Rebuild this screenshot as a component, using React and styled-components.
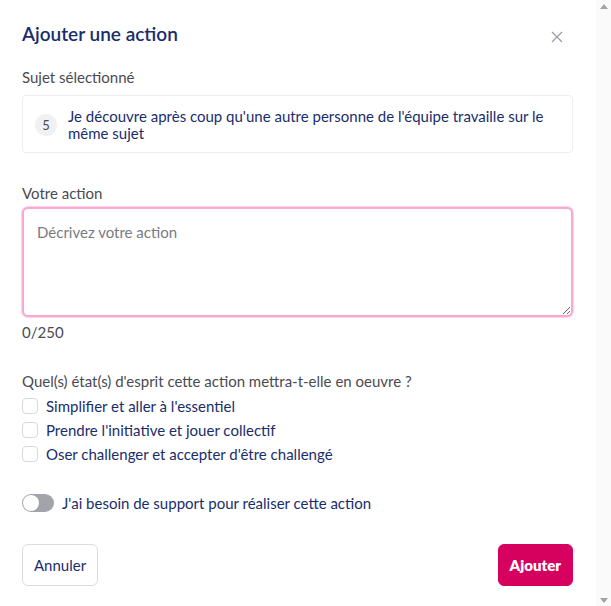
import styled, { createGlobalStyle } from "styled-components";

const GlobalStyle = createGlobalStyle`
  body {
    margin: 0;
    background: #fff;
    font-family: Lato, "Noto Sans", sans-serif;
    -webkit-font-smoothing: antialiased;
  }
  * {
    box-sizing: border-box;
  }
`;

const NAVY = "#1a2d6b";
const PINK = "#d6005f";

const Page = styled.div`
  display: flex;
  height: 100vh;
  overflow: hidden;
`;

const Modal = styled.div`
  flex: 1;
  display: flex;
  flex-direction: column;
  padding: 21px 23px 20px 22px;
  color: ${NAVY};
`;

const ScrollTrack = styled.div`
  flex: none;
  width: 15px;
  display: flex;
  flex-direction: column;
  justify-content: space-between;
  align-items: center;
  padding: 4px 0 3px;
  background: #fafafa;
`;

const Header = styled.div`
  display: flex;
  align-items: center;
  justify-content: space-between;
  height: 26px;
  margin-bottom: 20px;
`;

const Title = styled.h2`
  margin: 0;
  font-size: 19px;
  font-weight: 600;
  color: ${NAVY};
`;

const CloseButton = styled.button`
  border: none;
  background: transparent;
  padding: 0;
  margin-right: 10px;
  margin-top: 6px;
  width: 12px;
  height: 12px;
  display: flex;
  cursor: pointer;
`;

const Label = styled.div`
  font-size: 15px;
  color: #4a4a52;
  line-height: 20px;
  margin-bottom: ${(p) => p.$gap || 8}px;
`;

const SubjectBox = styled.div`
  display: flex;
  align-items: center;
  gap: 11px;
  border: 1px solid #eeeeef;
  border-radius: 4px;
  padding: 12px 12px 10px 12px;
  margin-bottom: 30px;
`;

const Badge = styled.span`
  flex: none;
  width: 22px;
  height: 22px;
  border-radius: 50%;
  background: #f1f1f2;
  color: #4a4a52;
  font-size: 13px;
  display: flex;
  align-items: center;
  justify-content: center;
`;

const SubjectText = styled.span`
  font-size: 15px;
  line-height: 17px;
  color: ${NAVY};
`;

const TextArea = styled.textarea`
  display: block;
  width: 100%;
  height: 112px;
  margin-top: -1px;
  resize: vertical;
  border: 2px solid #f7a9d2;
  box-shadow: 0 0 0 1px #fcd3e8;
  border-radius: 6px;
  padding: 14px 13px;
  font-family: inherit;
  font-size: 15px;
  color: ${NAVY};
  outline: none;
  &::placeholder {
    color: #7a7a82;
  }
`;

const Counter = styled.div`
  font-size: 15px;
  line-height: 20px;
  color: #4a4a52;
  margin-top: 5px;
  margin-bottom: 29px;
`;

const CheckList = styled.div`
  display: flex;
  flex-direction: column;
  gap: 6px;
  margin-bottom: 30px;
`;

const CheckRow = styled.label`
  display: flex;
  align-items: center;
  gap: 8px;
  font-size: 15px;
  line-height: 18px;
  color: ${NAVY};
  cursor: pointer;
`;

const CheckBox = styled.span`
  width: 16px;
  height: 16px;
  border: 1px solid #d9d9dd;
  border-radius: 4px;
  background: #fff;
  flex: none;
`;

const ToggleRow = styled.label`
  display: flex;
  align-items: center;
  gap: 8px;
  font-size: 15px;
  line-height: 20px;
  color: ${NAVY};
  margin-bottom: 31px;
`;

const Toggle = styled.span`
  position: relative;
  width: 32px;
  height: 18px;
  border-radius: 9px;
  background: #a3a3ab;
  flex: none;
  &::after {
    content: "";
    position: absolute;
    top: 1px;
    left: 1px;
    width: 16px;
    height: 16px;
    border-radius: 50%;
    background: #fff;
  }
`;

const Footer = styled.div`
  display: flex;
  justify-content: space-between;
`;

const Button = styled.button`
  height: 42px;
  padding: 0 11px;
  border-radius: 6px;
  font-family: inherit;
  font-size: 15px;
  font-weight: ${(p) => (p.$primary ? 800 : 400)};
  color: ${(p) => (p.$primary ? "#fff" : NAVY)};
  background: ${(p) => (p.$primary ? PINK : "#fff")};
  border: 1px solid ${(p) => (p.$primary ? PINK : "#dcdce0")};
  cursor: pointer;
`;

const options = [
  "Simplifier et aller à l'essentiel",
  "Prendre l'initiative et jouer collectif",
  "Oser challenger et accepter d'être challengé",
];

function Arrow({ down }) {
  return (
    <svg width="8" height="5" viewBox="0 0 8 5">
      <path d={down ? "M0 0H8L4 5Z" : "M0 5H8L4 0Z"} fill="#a3a3a3" />
    </svg>
  );
}

export default function App() {
  return (
    <>
      <GlobalStyle />
      <Page>
        <Modal>
          <Header>
            <Title>Ajouter une action</Title>
            <CloseButton aria-label="Fermer">
              <svg width="12" height="12" viewBox="0 0 12 12">
                <path
                  d="M1 1L11 11M11 1L1 11"
                  stroke="#9b9ba3"
                  strokeWidth="1.2"
                  fill="none"
                />
              </svg>
            </CloseButton>
          </Header>

          <Label $gap={8}>Sujet sélectionné</Label>
          <SubjectBox>
            <Badge>5</Badge>
            <SubjectText>
              Je découvre après coup qu'une autre personne de l'équipe
              travaille sur le même sujet
            </SubjectText>
          </SubjectBox>

          <Label $gap={5}>Votre action</Label>
          <TextArea placeholder="Décrivez votre action" />
          <Counter>0/250</Counter>

          <Label $gap={6}>
            Quel(s) état(s) d'esprit cette action mettra-t-elle en oeuvre ?
          </Label>
          <CheckList>
            {options.map((o) => (
              <CheckRow key={o}>
                <CheckBox />
                {o}
              </CheckRow>
            ))}
          </CheckList>

          <ToggleRow>
            <Toggle />
            J'ai besoin de support pour réaliser cette action
          </ToggleRow>

          <Footer>
            <Button>Annuler</Button>
            <Button $primary>Ajouter</Button>
          </Footer>
        </Modal>
        <ScrollTrack>
          <Arrow />
          <Arrow down />
        </ScrollTrack>
      </Page>
    </>
  );
}
